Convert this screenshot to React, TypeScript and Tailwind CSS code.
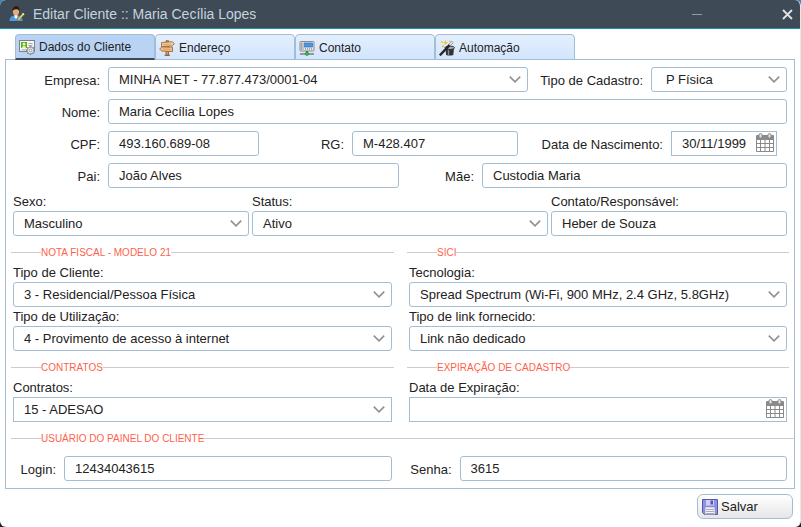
import { useId, type ReactNode } from "react";

const boxClass =
  "block h-[25px] w-full min-w-0 border border-[#a3bdd2] bg-white pr-2 text-[13px] text-[#222] outline-none focus:border-[#4d90c8]";

function UserEditIcon() {
  return (
    <svg width="16" height="16" viewBox="0 0 16 16" aria-hidden="true">
      <path d="M.5 15c0-3.500 1.500-5 4.500-5.500h4c3 .5 4.500 2 4.500 5.500z" fill="#4f9be0" />
      <path d="M5.500 9h3l-.3 2.500-1.200 1.500-1.300-1.500z" fill="#fff" />
      <ellipse cx="7" cy="5.500" rx="3.100" ry="4" fill="#e8ad77" />
      <path d="M3.600 5.500C3.100 2 5 .3 7.200.3S10.900 2 10.300 5.500C9.900 4 9 3.300 7.500 3.200 5.500 3.100 4.200 4 3.600 5.500z" fill="#2b1a10" />
      <path d="M8 15l.7-2.200L13.800 7l1.500 1.400-5.200 5.800z" fill="#f4cf55" stroke="#7a5a22" strokeWidth=".5" />
      <path d="M13.200 7.700l.8-.9 1.500 1.400-.8.900z" fill="#f3eee6" />
    </svg>
  );
}

function CardGearIcon() {
  return (
    <svg width="16" height="16" viewBox="0 0 16 16" aria-hidden="true">
      <rect x=".5" y="1.500" width="15" height="11" fill="#f6f6f6" stroke="#7d8182" />
      <rect x="2" y="3" width="6" height="6" fill="#5fae19" />
      <path d="M3 9c0-1.500.8-2 2-2s2 .5 2 2z" fill="#d9f3a7" />
      <circle cx="5" cy="5.200" r="1.400" fill="#e6f8c0" />
      <path d="M9.500 4.500h4M9.500 6.500h4M2.500 10.800h5" stroke="#a6a8a8" />
      <g stroke="#85888a" strokeWidth="1.800">
        <path d="M11.500 7v9M7 11.500h9M8.300 8.300l6.400 6.400M14.700 8.300l-6.400 6.400" />
      </g>
      <circle cx="11.500" cy="11.500" r="3.300" fill="#e4e6e7" stroke="#85888a" strokeWidth=".7" />
      <circle cx="11.500" cy="11.500" r="1.300" fill="#fff" stroke="#85888a" strokeWidth=".8" />
    </svg>
  );
}

function SignpostIcon() {
  return (
    <svg width="16" height="16" viewBox="0 0 16 16" aria-hidden="true">
      <path d="M7 .7h2.500v14.600H7z" fill="#d69a59" stroke="#8a5a2c" strokeWidth=".8" />
      <path d="M2.500 2.600l10.500-.9 2.400 1.900-2.200 2.300-10.700.6z" fill="#f6cf9f" stroke="#96602c" strokeWidth=".8" />
      <path d="M13.500 7.200L3 6.900.6 9l2.200 2.100 10.700.5z" fill="#f2c088" stroke="#96602c" strokeWidth=".8" />
      <path d="M4 4.500l8-.6M4 9l8 .4" stroke="#c98f55" strokeWidth=".7" />
      <path d="M5.500 15.300h5.500" stroke="#8a5a2c" />
    </svg>
  );
}

function PhoneNetworkIcon() {
  return (
    <svg width="16" height="16" viewBox="0 0 16 16" aria-hidden="true">
      <rect x="1" y="1.500" width="14" height="9.500" rx=".8" fill="#e4e5e6" stroke="#898c8e" />
      <path d="M2.500 2.500V10M4 2.500V10" stroke="#a2a5a7" />
      <rect x="5.500" y="3" width="8" height="4" fill="#4a97e6" stroke="#2a65a8" strokeWidth=".6" />
      <path d="M6 8.500h7M6 9.800h7" stroke="#a2a5a7" strokeDasharray="1 1" />
      <path d="M8 11V14" stroke="#6c7072" strokeWidth="2" />
      <path d="M1 14h14" stroke="#5c6a60" strokeWidth="1.200" />
      <circle cx="8" cy="13.800" r="1.700" fill="#3fc052" stroke="#16802a" strokeWidth=".6" />
    </svg>
  );
}

function MagicHatIcon() {
  return (
    <svg width="16" height="16" viewBox="0 0 16 16" aria-hidden="true">
      <path d="M6.500 8h8.500l-.7 7q-3.600 1-7.200 0z" fill="#333335" />
      <path d="M9.500 10v5" stroke="#8b8c90" strokeWidth="1.300" />
      <ellipse cx="10.700" cy="7.800" rx="4.900" ry="1.700" fill="#a9aaad" stroke="#2b2b2d" strokeWidth=".9" />
      <path d="M.8 15.300L11 4.700" stroke="#242426" strokeWidth="2.400" />
      <path d="M10.500 5.200l3.200-3.400" stroke="#6c6d70" strokeWidth="2.300" />
      <path d="M10.700 5l2.800-3" stroke="#f5f5f6" strokeWidth="1.300" />
      <path d="M6.500 0l.8 1.900 1.900.7-1.900.8-.8 1.900-.8-1.900-1.900-.8 1.900-.7z" fill="#f6c526" />
      <path d="M4 4.800l.5 1 1 .4-1 .5-.5 1-.5-1-1-.5 1-.4zM11 0l.4.9.9.4-.9.400-.4.900-.4-.9-.9-.4.900-.4zM3 .8l.4.800.8.4-.8.4-.4.800-.4-.8-.8-.4.800-.4z" fill="#f0b91d" />
    </svg>
  );
}

function SaveIcon() {
  return (
    <svg width="16" height="16" viewBox="0 0 16 16" aria-hidden="true">
      <path d="M.5.500h15v15h-13l-2-2z" fill="#8d92e8" stroke="#5557a8" />
      <rect x="4" y="1" width="8" height="5.500" fill="#cdd1f8" />
      <rect x="8.500" y="1.500" width="2.500" height="4" fill="#5557a8" />
      <rect x="3" y="8" width="10" height="7.500" fill="#f4f4f7" stroke="#8486b8" strokeWidth=".6" />
      <path d="M4 10.500h8M4 12.500h8M4 14.500h8" stroke="#a9aab4" />
    </svg>
  );
}

function CalendarIcon() {
  return (
    <svg width="18" height="19" viewBox="0 0 18 19" aria-hidden="true">
      <rect x="0" y="2" width="18" height="17" rx="1" fill="#8a8a8a" />
      <path d="M1 7h3v3H1zM5 7h3.500v3H5zM9.500 7H13v3H9.500zM14 7h3v3h-3zM1 11h3v3H1zM5 11h3.500v3H5zM9.500 11H13v3H9.500zM14 11h3v3h-3zM1 15h3v3H1zM5 15h3.500v3H5zM9.500 15H13v3H9.500zM14 15h3v3h-3z" fill="#fff" />
      <rect x="3" y=".5" width="3" height="4.500" rx="1.500" fill="#e4e4e4" stroke="#8a8a8a" />
      <rect x="12" y=".5" width="3" height="4.500" rx="1.500" fill="#e4e4e4" stroke="#8a8a8a" />
    </svg>
  );
}

function Chevron() {
  return (
    <svg
      className="pointer-events-none absolute top-[9px] right-[7px]"
      width="12"
      height="7"
      viewBox="0 0 12 7"
      fill="none"
      stroke="#919191"
      strokeWidth="1.600"
      aria-hidden="true"
    >
      <path d="M.8.600L6 5.800 11.200.6" />
    </svg>
  );
}

type FieldProps = {
  label: string;
  value: string;
  kind?: "text" | "select" | "date";
  square?: boolean;
  pad?: string;
};

function Control({ id, value, kind = "text", square, pad = "pl-2.5" }: FieldProps & { id: string }) {
  const shape = square ? "" : "rounded-[3px]";
  if (kind === "select") {
    return (
      <div className="relative">
        <select id={id} defaultValue={value} className={`${boxClass} ${shape} ${pad} appearance-none`}>
          <option>{value}</option>
        </select>
        <Chevron />
      </div>
    );
  }
  if (kind === "date") {
    return (
      <div className="relative">
        <input id={id} type="text" defaultValue={value} className={`${boxClass} ${pad}`} />
        <button type="button" aria-label="Abrir calendário" className="absolute top-0.5 right-[3px]">
          <CalendarIcon />
        </button>
      </div>
    );
  }
  return <input id={id} type="text" defaultValue={value} className={`${boxClass} ${shape} ${pad}`} />;
}

/* Label to the left of the control, right-aligned against it. */
function InlineField({ labelWidth, grow, ...field }: FieldProps & { labelWidth: string; grow: string }) {
  const id = useId();
  return (
    <>
      <label htmlFor={id} className={`${labelWidth} shrink-0 pt-0.5 pr-2 text-right whitespace-nowrap`}>
        {field.label}
      </label>
      <div className={`${grow} min-w-0`}>
        <Control id={id} {...field} />
      </div>
    </>
  );
}

/* Label above the control. */
function StackedField(field: FieldProps) {
  const id = useId();
  return (
    <div className="min-w-0">
      <label htmlFor={id} className="block pt-px leading-[18px]">
        {field.label}
      </label>
      <Control id={id} {...field} />
    </div>
  );
}

function Row({ children }: { children: ReactNode }) {
  return <div className="flex items-center">{children}</div>;
}

function Group({ title, children }: { title: string; children: ReactNode }) {
  return (
    <fieldset className="min-w-0 border-t border-[#ccc] px-0.5">
      <legend className="ml-7 pt-0.5 text-[10px] leading-3 text-[#ff5f4a]">{title}</legend>
      {children}
    </fieldset>
  );
}

const tabs = [
  { title: "Dados do Cliente", icon: <CardGearIcon /> },
  { title: "Endereço", icon: <SignpostIcon /> },
  { title: "Contato", icon: <PhoneNetworkIcon /> },
  { title: "Automação", icon: <MagicHatIcon /> },
];

export default function App() {
  return (
    <div className="bg-linear-to-b from-[#3f86bd] to-[#14222c] font-['Liberation_Sans',Arial,sans-serif] text-[13px] leading-4 text-[#222]">
      <div className="overflow-hidden rounded-[6px] border-r border-[#e3e7ea] bg-white">
        <header className="flex h-[29px] items-center border-b border-[#1596b4] bg-[#3e4a55] pr-[7px] pl-[9px] text-[#c6d3df]">
          <UserEditIcon />
          <h1 className="ml-2 flex-1 truncate text-[14px] leading-4">Editar Cliente :: Maria Cecília Lopes</h1>
          <button type="button" aria-label="Minimizar" className="mr-20">
            <svg width="10" height="10" viewBox="0 0 10 10" aria-hidden="true">
              <path d="M0 5.500h10" stroke="#9b9d9c" />
            </svg>
          </button>
          <button type="button" aria-label="Fechar">
            <svg width="11" height="11" viewBox="0 0 11 11" stroke="#e0e2e4" strokeWidth="1.800" aria-hidden="true">
              <path d="M1 1l9 9M10 1l-9 9" />
            </svg>
          </button>
        </header>

        <main className="px-[5px] pt-[5px]">
          <div role="tablist" className="relative -mb-px flex pl-2.5">
            {tabs.map((tab, index) => (
              <button
                key={tab.title}
                type="button"
                role="tab"
                aria-selected={index === 0}
                className={`flex h-[26px] w-35 items-center gap-1 rounded-t-[4px] border border-[#a3bdd2] pl-[3px] text-[12px] ${
                  index === 0
                    ? "border-b-2 border-b-[#3e4a55] bg-[#b9d3f4]"
                    : "bg-linear-to-b from-[#e3effd] to-[#d3e5fd] pt-0.5"
                }`}
              >
                {tab.icon}
                {tab.title}
              </button>
            ))}
          </div>

          <form className="border border-[#a3bdd2] pt-[7px] pb-[7px] pl-[5px]">
            <div className="flex flex-col gap-[7px] pr-[7px] pl-0.5">
              <Row>
                <InlineField label="Empresa:" value="MINHA NET - 77.877.473/0001-04" kind="select" labelWidth="w-[95px]" grow="flex-[420]" />
                <InlineField label="Tipo de Cadastro:" value="P Física" kind="select" pad="pl-3.5" labelWidth="w-[123px]" grow="flex-[136]" />
              </Row>
              <Row>
                <InlineField label="Nome:" value="Maria Cecília Lopes" labelWidth="w-[95px]" grow="flex-1" />
              </Row>
              <div className="pr-2.5">
                <Row>
                  <InlineField label="CPF:" value="493.160.689-08" labelWidth="w-[95px]" grow="flex-[151]" />
                  <InlineField label="RG:" value="M-428.407" labelWidth="w-[93px]" grow="flex-[166]" />
                  <InlineField label="Data de Nascimento:" value="30/11/1999" kind="date" labelWidth="w-[153px]" grow="flex-[106]" />
                </Row>
              </div>
              <Row>
                <InlineField label="Pai:" value="João Alves" labelWidth="w-[95px]" grow="flex-[291]" />
                <InlineField label="Mãe:" value="Custodia Maria" labelWidth="w-[83px]" grow="flex-[305]" />
              </Row>
            </div>

            <div className="mt-1 grid grid-cols-[236fr_296fr_236fr] gap-[3px] pr-[7px] pl-0.5">
              <StackedField label="Sexo:" value="Masculino" kind="select" />
              <StackedField label="Status:" value="Ativo" kind="select" />
              <StackedField label="Contato/Responsável:" value="Heber de Souza" />
            </div>

            <div className="mt-[9px] grid grid-cols-[383fr_382fr] gap-x-[13px] gap-y-[9px] pr-[5px]">
              <Group title="NOTA FISCAL - MODELO 21">
                <div className="pt-1">
                  <StackedField label="Tipo de Cliente:" value="3 - Residencial/Pessoa Física" kind="select" />
                  <StackedField label="Tipo de Utilização:" value="4 - Provimento de acesso à internet" kind="select" />
                </div>
              </Group>
              <Group title="SICI">
                <div className="pt-1">
                  <StackedField label="Tecnologia:" value="Spread Spectrum (Wi-Fi, 900 MHz, 2.4 GHz, 5.8GHz)" kind="select" />
                  <StackedField label="Tipo de link fornecido:" value="Link não dedicado" kind="select" />
                </div>
              </Group>
              <Group title="CONTRATOS">
                <div className="pt-1">
                  <StackedField label="Contratos:" value="15 - ADESAO" kind="select" square />
                </div>
              </Group>
              <Group title="EXPIRAÇÃO DE CADASTRO">
                <div className="pt-1">
                  <StackedField label="Data de Expiração:" value="" kind="date" />
                </div>
              </Group>
            </div>

            <div className="mt-[9px]">
              <Group title="USUÁRIO DO PAINEL DO CLIENTE">
                <div className="pt-[11px] pr-[5px]">
                  <Row>
                    <InlineField label="Login:" value="12434043615" labelWidth="w-[51px]" grow="flex-1" />
                    <InlineField label="Senha:" value="3615" labelWidth="w-[68px]" grow="flex-1" />
                  </Row>
                </div>
              </Group>
            </div>
          </form>
        </main>

        <footer className="flex justify-end pt-[5px] pr-[7px] pb-2">
          <button
            type="button"
            className="flex h-[25px] w-24 items-center gap-[3px] rounded-[6px] border border-[#a3bdd2] bg-linear-to-b from-white to-[#e6e6e6] pl-1"
          >
            <SaveIcon />
            Salvar
          </button>
        </footer>
      </div>
    </div>
  );
}
